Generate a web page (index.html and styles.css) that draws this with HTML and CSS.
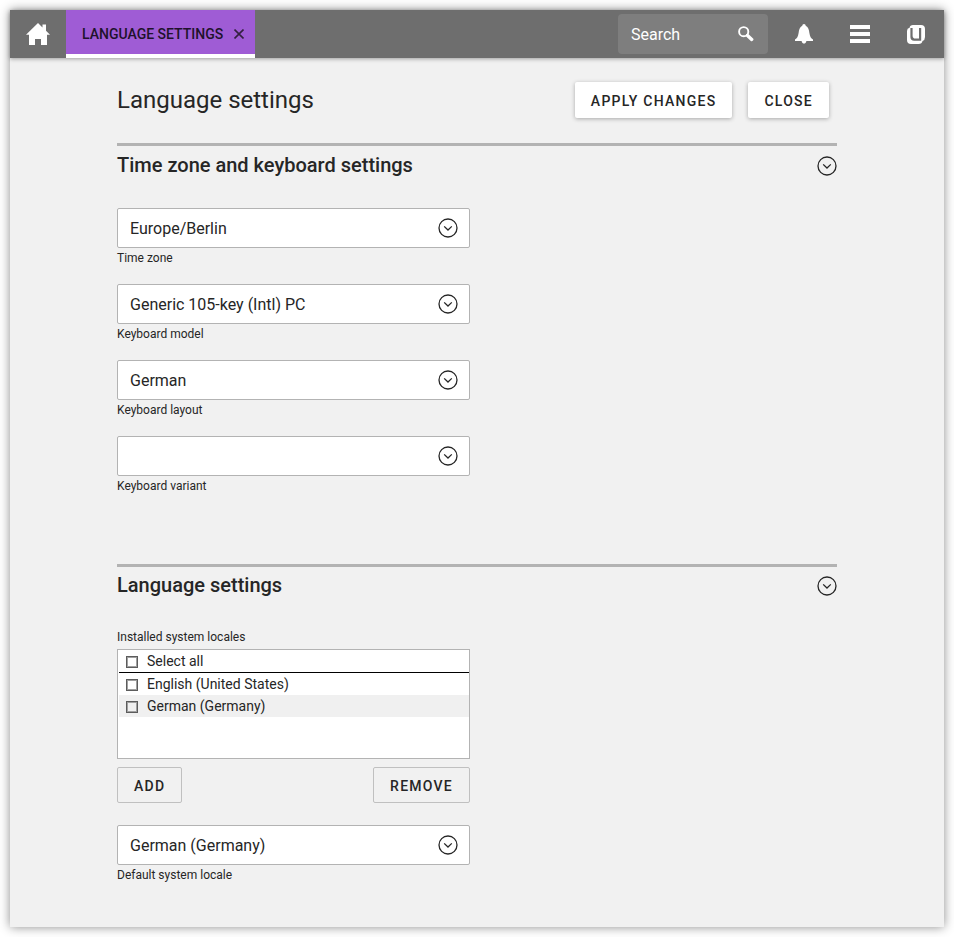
FILE: index.html
```html
<!DOCTYPE html>
<html lang="en">
<head>
<meta charset="utf-8">
<title>Language settings</title>
<link rel="stylesheet" href="styles.css">
</head>
<body>
<svg class="defs" width="0" height="0">
  <symbol id="chevron" viewBox="0 0 20 20">
    <circle cx="10" cy="10" r="9" fill="none" stroke="currentColor" stroke-width="1.3"/>
    <path d="M6.2 8.4 L10 12 L13.8 8.4" fill="none" stroke="currentColor" stroke-width="1.3"/>
  </symbol>
</svg>
<div class="window">
  <header class="topbar">
    <div class="home">
      <svg width="24" height="24" viewBox="0 0 24 24" fill="#fff"><path d="M12 1 L16.5 5.4 V2.5 H20 V8.8 L24 12.8 H21 V23 H15 V17 H9 V23 H3 V12.8 H0 Z"/></svg>
    </div>
    <div class="tab">
      <span>LANGUAGE SETTINGS</span>
      <svg width="10" height="10" viewBox="0 0 10 10"><path d="M.5.5 L9.5 9.5 M9.5.5 L.5 9.5" stroke="#33203f" stroke-width="1.6"/></svg>
    </div>
    <div class="search">
      <span>Search</span>
      <svg width="16" height="16" viewBox="0 0 16 16"><circle cx="5.7" cy="5.7" r="4.6" fill="none" stroke="#fff" stroke-width="1.9"/><path d="M9.5 9.5 L13.7 13.4" stroke="#fff" stroke-width="3.4" stroke-linecap="round"/></svg>
    </div>
    <svg class="bell" width="18" height="20" viewBox="0 0 18 20" fill="#fff"><path d="M9 0 C10 0 10.6.8 10.7 1.8 C13.4 3 14 6 14.4 9 C14.9 12.5 16 14.5 18 15.5 V17 H11.4 C11 18.9 10 19.6 9 19.6 S7 18.9 6.6 17 H0 V15.5 C2 14.5 3.1 12.5 3.6 9 C4 6 4.6 3 7.3 1.8 C7.4.8 8 0 9 0 Z"/></svg>
    <svg class="menu" width="20" height="18" viewBox="0 0 20 18" fill="#fff"><path d="M0 0 H20 V4 H0 Z M0 7 H20 V11 H0 Z M0 14 H20 V18 H0 Z"/></svg>
    <svg class="brand" width="18" height="19" viewBox="0 0 18 19"><path d="M6 0 H14 Q18 0 18 4 V12 Q18 15 15.5 16 Q15 19 11.5 19 H4 Q0 19 0 15 V6 Q0 3.3 2.6 2.8 Q3 0 6 0 Z" fill="#fff"/><path d="M5.6 3 H3.4 V12 Q3.4 15.7 7.2 15.7 H14.2 V3 H12 V13.6 H8.4 Q5.6 13.6 5.6 10.8 Z" fill="#6e6e6e"/></svg>
  </header>
  <main class="page">
    <div class="title-row">
      <h1>Language settings</h1>
      <button class="btn raised">APPLY CHANGES</button>
      <button class="btn raised">CLOSE</button>
    </div>
    <section class="keyboard">
      <div class="section-head"><h2>Time zone and keyboard settings</h2><svg class="chevron"><use href="#chevron"/></svg></div>
      <div class="field"><div class="select"><span>Europe/Berlin</span><svg class="chevron"><use href="#chevron"/></svg></div><label>Time zone</label></div>
      <div class="field"><div class="select"><span>Generic 105-key (Intl) PC</span><svg class="chevron"><use href="#chevron"/></svg></div><label>Keyboard model</label></div>
      <div class="field"><div class="select"><span>German</span><svg class="chevron"><use href="#chevron"/></svg></div><label>Keyboard layout</label></div>
      <div class="field"><div class="select"><span></span><svg class="chevron"><use href="#chevron"/></svg></div><label>Keyboard variant</label></div>
    </section>
    <section class="language">
      <div class="section-head"><h2>Language settings</h2><svg class="chevron"><use href="#chevron"/></svg></div>
      <div class="locales">
        <label>Installed system locales</label>
        <div class="list">
          <div class="item all"><i class="box"></i><span>Select all</span></div>
          <div class="item"><i class="box"></i><span>English (United States)</span></div>
          <div class="item odd"><i class="box"></i><span>German (Germany)</span></div>
        </div>
        <div class="actions"><button class="btn flat">ADD</button><button class="btn flat">REMOVE</button></div>
      </div>
      <div class="field"><div class="select"><span>German (Germany)</span><svg class="chevron"><use href="#chevron"/></svg></div><label>Default system locale</label></div>
    </section>
  </main>
</div>
</body>
</html>
```
FILE: styles.css
```css
* { box-sizing: border-box; }
body {
  margin: 0;
  padding: 10px;
  background: #fff;
  color: #262626;
  font: 16px/20px Roboto, sans-serif;
}
svg { display: block; flex: none; }
.defs { position: absolute; }
.window {
  height: 917px;
  background: #f1f1f1;
  box-shadow: 0 0 10px rgba(0, 0, 0, .45);
}
.topbar {
  display: flex;
  align-items: center;
  height: 48px;
  padding-right: 19px;
  background: #6e6e6e;
  color: #fff;
  box-shadow: 0 1px 4px rgba(0, 0, 0, .35);
}
.home { width: 56px; padding-left: 16px; }
.tab {
  display: flex;
  align-items: center;
  justify-content: space-between;
  width: 189px;
  height: 48px;
  padding: 4px 11px 0 16px;
  border-bottom: 4px solid #fff;
  background: #9f5cd5;
  color: #20122b;
  font-size: 14px;
  font-weight: 500;
}
.search {
  display: flex;
  align-items: center;
  justify-content: space-between;
  width: 150px;
  height: 40px;
  margin-left: auto;
  padding: 0 14px 0 13px;
  border-radius: 4px;
  background: #7e7e7e;
}
.search span, .select span { padding-top: 2px; }
.bell { margin-left: 27px; }
.menu { margin-left: 37px; }
.brand { margin-left: 37px; }
.page { width: 720px; margin-left: 107px; padding-top: 24px; }
.title-row { display: flex; height: 61px; padding-right: 8px; }
h1 { flex: 1; margin: 0; font-size: 24px; font-weight: 400; line-height: 36px; }
.btn {
  border: 0;
  border-radius: 2px;
  padding: 2px 16px 0;
  color: #262626;
  font: 500 14px/20px Roboto, sans-serif;
  letter-spacing: 1.25px;
}
.raised {
  height: 36px;
  margin-left: 16px;
  background: #fff;
  box-shadow: 0 1px 4px rgba(0, 0, 0, .3);
}
.flat { height: 36px; border: 1px solid #c0c0c0; background: transparent; }
.keyboard { height: 421px; }
.section-head {
  display: flex;
  justify-content: space-between;
  height: 65px;
  border-top: 3px solid #b3b3b3;
}
.section-head .chevron { margin-top: 10px; }
h2 { margin: 0; font-size: 20px; font-weight: 500; line-height: 38px; }
.language h2 { line-height: 36px; }
.language .section-head .chevron { margin-top: 9px; }
.chevron { width: 20px; height: 20px; }
.field { width: 353px; height: 76px; }
.select {
  display: flex;
  align-items: center;
  justify-content: space-between;
  height: 40px;
  padding: 0 11px 0 12px;
  border: 1px solid #b3b3b3;
  border-radius: 2px;
  background: #fff;
}
label { display: block; font-size: 12px; line-height: 20px; }
.locales { width: 353px; height: 196px; }
.locales label { height: 20px; line-height: 16px; }
.list {
  height: 110px;
  padding-left: 1px;
  border: 1px solid #b3b3b3;
  background: #fff;
  font-size: 14px;
}
.item { display: flex; align-items: center; height: 22px; padding-left: 7px; }
.all { height: 23px; border-bottom: 1px solid #000; }
.odd { background: #f0f0f0; }
.box {
  width: 12px;
  height: 12px;
  margin: 2px 9px 0 0;
  border: 1px solid #5c5c5c;
  box-shadow: inset 0 0 0 1px #a0a0a0;
}
.actions { display: flex; justify-content: space-between; margin-top: 8px; }
```
